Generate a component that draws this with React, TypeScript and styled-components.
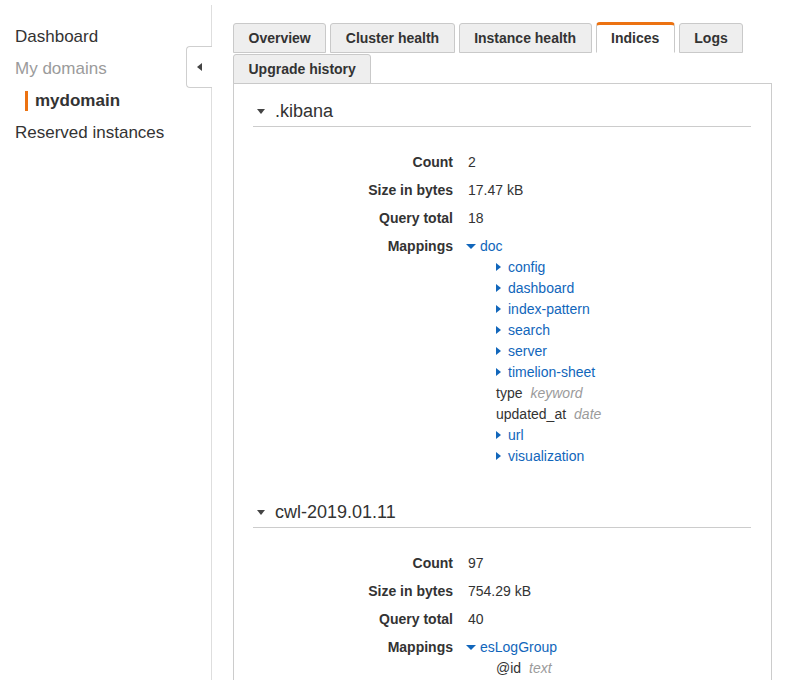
import React from 'react';
import styled, { createGlobalStyle, css } from 'styled-components';

const GlobalStyle = createGlobalStyle`
  html, body {
    margin: 0;
    padding: 0;
    background: #fff;
  }
  body {
    font-family: "Liberation Sans", Arial, Helvetica, sans-serif;
    color: #333;
  }
`;

const orange = '#ec7211';
const link = '#1166bb';

type MappingNode = {
  name: string;
  type?: string;
  open?: boolean;
  children?: MappingNode[];
};

type IndexInfo = {
  name: string;
  count: string;
  size: string;
  queries: string;
  mapping: MappingNode;
};

const indices: IndexInfo[] = [
  {
    name: '.kibana',
    count: '2',
    size: '17.47 kB',
    queries: '18',
    mapping: {
      name: 'doc',
      open: true,
      children: [
        { name: 'config', children: [] },
        { name: 'dashboard', children: [] },
        { name: 'index-pattern', children: [] },
        { name: 'search', children: [] },
        { name: 'server', children: [] },
        { name: 'timelion-sheet', children: [] },
        { name: 'type', type: 'keyword' },
        { name: 'updated_at', type: 'date' },
        { name: 'url', children: [] },
        { name: 'visualization', children: [] },
      ],
    },
  },
  {
    name: 'cwl-2019.01.11',
    count: '97',
    size: '754.29 kB',
    queries: '40',
    mapping: {
      name: 'esLogGroup',
      open: true,
      children: [{ name: '@id', type: 'text' }],
    },
  },
];

const tabs = ['Overview', 'Cluster health', 'Instance health', 'Indices', 'Logs', 'Upgrade history'];

const Page = styled.div`
  display: flex;
  min-height: 100vh;
`;

const Sidebar = styled.nav`
  position: relative;
  flex: 0 0 212px;
  box-sizing: border-box;
  margin-top: 5px;
  padding: 16px 0 0 15px;
  border-right: 1px solid #dedede;
`;

const NavItem = styled.div<{ $muted?: boolean }>`
  font-size: 17px;
  line-height: 32px;
  color: ${({ $muted }) => ($muted ? '#9b9b9b' : '#333')};
`;

const NavSubItem = styled.div`
  margin: 6px 0 6px 10px;
  padding-left: 7px;
  border-left: 3px solid ${orange};
  font-size: 17px;
  font-weight: bold;
  line-height: 20px;
  color: #333;
`;

const CollapseButton = styled.button`
  position: absolute;
  top: 41px;
  right: -1px;
  width: 26px;
  height: 42px;
  box-sizing: border-box;
  display: flex;
  align-items: center;
  justify-content: center;
  padding: 0;
  background: #fff;
  border: 1px solid #cfcfcf;
  border-right: none;
  border-radius: 4px 0 0 4px;
  cursor: pointer;
`;

const LeftCaret = styled.span`
  display: block;
  width: 0;
  height: 0;
  border-top: 4.5px solid transparent;
  border-bottom: 4.5px solid transparent;
  border-right: 5px solid #444;
`;

const Main = styled.main`
  flex: 1;
  min-width: 0;
  padding: 23px 14px 0 21px;
`;

const TabBar = styled.div`
  display: flex;
  flex-wrap: wrap;
  column-gap: 4px;
  row-gap: 1px;
`;

const Tab = styled.div<{ $active?: boolean }>`
  height: 30px;
  box-sizing: border-box;
  padding: 0 14.5px;
  background: #eeeeee;
  border: 1px solid #c9c9c9;
  border-radius: 3px 3px 0 0;
  font-size: 14px;
  font-weight: bold;
  line-height: 28px;
  color: #333;
  white-space: nowrap;
  cursor: pointer;

  ${({ $active }) =>
    $active &&
    css`
      height: 31px;
      margin-top: -1px;
      background: #fff;
      border-top: 3px solid ${orange};
      border-bottom-color: #fff;
      border-radius: 4px 4px 0 0;
      line-height: 27px;
    `}
`;

const Panel = styled.div`
  margin-top: -1px;
  padding: 0 20px 0 19px;
  border: 1px solid #cccccc;
`;

const Section = styled.section`
  padding: 15px 0;
`;

const SectionHeader = styled.h3`
  display: flex;
  align-items: center;
  margin: 0;
  padding: 0 0 3px 4px;
  border-bottom: 1px solid #cccccc;
  font-size: 18px;
  font-weight: normal;
  line-height: 24px;
  color: #333;
`;

const DownCaret = styled.span<{ $size: number; $color: string; $gap: number; $shift?: number }>`
  display: inline-block;
  flex: none;
  width: 0;
  height: 0;
  margin-left: ${({ $shift }) => $shift ?? 0}px;
  margin-right: ${({ $gap }) => $gap}px;
  border-left: ${({ $size }) => $size / 2}px solid transparent;
  border-right: ${({ $size }) => $size / 2}px solid transparent;
  border-top: ${({ $size }) => Math.round($size / 2)}px solid ${({ $color }) => $color};
`;

const RightCaret = styled.span`
  display: inline-block;
  flex: none;
  width: 0;
  height: 0;
  margin-right: 7px;
  border-top: 4px solid transparent;
  border-bottom: 4px solid transparent;
  border-left: 5px solid ${link};
`;

const Details = styled.dl`
  display: grid;
  grid-template-columns: 200px 1fr;
  column-gap: 15px;
  margin: 21px 0 0;
  font-size: 14px;
  line-height: 21px;
`;

const Label = styled.dt`
  padding: 3.5px 0;
  text-align: right;
  font-weight: bold;
  color: #333;
`;

const Value = styled.dd`
  margin: 0;
  padding: 3.5px 0;
  color: #333;
`;

const TreeLine = styled.div`
  display: flex;
  align-items: center;
  height: 21px;
  white-space: nowrap;
`;

const TreeLink = styled.a`
  color: ${link};
  text-decoration: none;
  cursor: pointer;
`;

const TreeChildren = styled.div`
  padding-left: 28px;
`;

const FieldType = styled.span`
  margin-left: 8px;
  font-style: italic;
  color: #9b9b9b;
`;

function MappingTree({ node }: { node: MappingNode }) {
  if (node.type) {
    return (
      <TreeLine>
        <span>{node.name}</span>
        <FieldType>{node.type}</FieldType>
      </TreeLine>
    );
  }
  return (
    <div>
      <TreeLine>
        {node.open ? <DownCaret $size={10} $color={link} $gap={4} $shift={-2} /> : <RightCaret />}
        <TreeLink>{node.name}</TreeLink>
      </TreeLine>
      {node.open && node.children && (
        <TreeChildren>
          {node.children.map((child) => (
            <MappingTree key={child.name} node={child} />
          ))}
        </TreeChildren>
      )}
    </div>
  );
}

function IndexSection({ index }: { index: IndexInfo }) {
  return (
    <Section>
      <SectionHeader>
        <DownCaret $size={9} $color="#444" $gap={10} />
        {index.name}
      </SectionHeader>
      <Details>
        <Label>Count</Label>
        <Value>{index.count}</Value>
        <Label>Size in bytes</Label>
        <Value>{index.size}</Value>
        <Label>Query total</Label>
        <Value>{index.queries}</Value>
        <Label>Mappings</Label>
        <Value>
          <MappingTree node={index.mapping} />
        </Value>
      </Details>
    </Section>
  );
}

export default function App() {
  return (
    <>
      <GlobalStyle />
      <Page>
        <Sidebar>
          <NavItem>Dashboard</NavItem>
          <NavItem $muted>My domains</NavItem>
          <NavSubItem>mydomain</NavSubItem>
          <NavItem>Reserved instances</NavItem>
          <CollapseButton aria-label="Collapse">
            <LeftCaret />
          </CollapseButton>
        </Sidebar>
        <Main>
          <TabBar>
            {tabs.map((t) => (
              <Tab key={t} $active={t === 'Indices'}>
                {t}
              </Tab>
            ))}
          </TabBar>
          <Panel>
            {indices.map((idx) => (
              <IndexSection key={idx.name} index={idx} />
            ))}
          </Panel>
        </Main>
      </Page>
    </>
  );
}
